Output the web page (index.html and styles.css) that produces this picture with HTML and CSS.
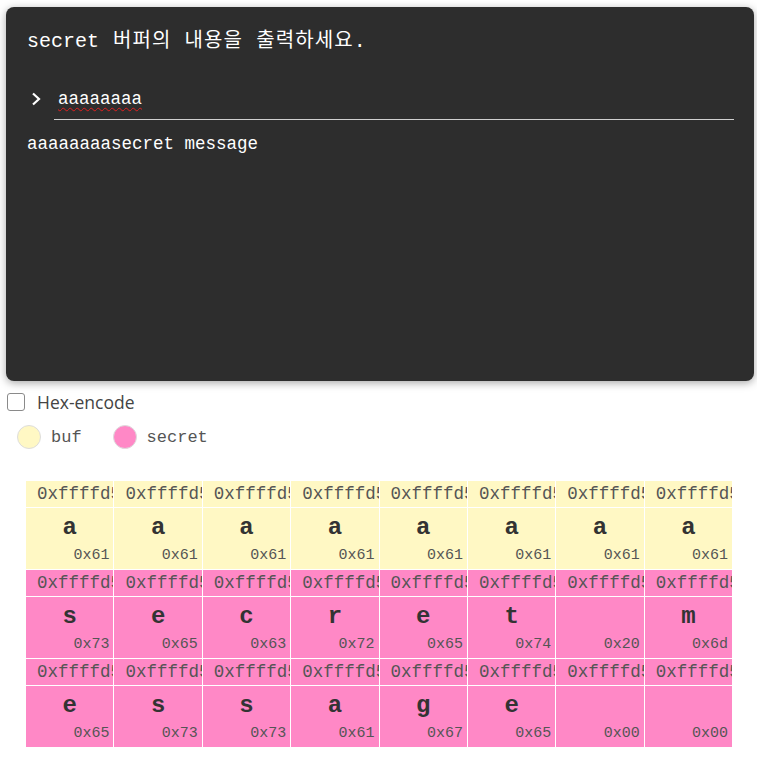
FILE: index.html
```html
<!DOCTYPE html>
<html lang="ko">
<head>
<meta charset="utf-8">
<title>secret buffer</title>
<link rel="stylesheet" href="styles.css">
</head>
<body>
<div class="terminal">
  <div class="title">secret <span class="ko">버퍼의 내용을 출력하세요</span>.</div>
  <div class="prompt">
    <svg class="chev" width="10" height="14" viewBox="0 0 10 14"><polyline points="2,1.5 8,7 2,12.5" fill="none" stroke="#fff" stroke-width="2.2"/></svg>
    <div class="input"><span class="typed">aaaaaaaa</span></div>
  </div>
  <div class="output">aaaaaaaasecret message</div>
</div>
<label class="hex"><span class="box"></span>Hex-encode</label>
<div class="legend">
  <div class="item"><span class="dot buf"></span><span class="lname">buf</span></div>
  <div class="item"><span class="dot sec"></span><span class="lname">secret</span></div>
</div>
<div class="memory">
  <div class="cell buf"><div class="addr">0xffffd5a0</div><div class="val"><div class="ch">a</div><div class="hx">0x61</div></div></div>
  <div class="cell buf"><div class="addr">0xffffd5a1</div><div class="val"><div class="ch">a</div><div class="hx">0x61</div></div></div>
  <div class="cell buf"><div class="addr">0xffffd5a2</div><div class="val"><div class="ch">a</div><div class="hx">0x61</div></div></div>
  <div class="cell buf"><div class="addr">0xffffd5a3</div><div class="val"><div class="ch">a</div><div class="hx">0x61</div></div></div>
  <div class="cell buf"><div class="addr">0xffffd5a4</div><div class="val"><div class="ch">a</div><div class="hx">0x61</div></div></div>
  <div class="cell buf"><div class="addr">0xffffd5a5</div><div class="val"><div class="ch">a</div><div class="hx">0x61</div></div></div>
  <div class="cell buf"><div class="addr">0xffffd5a6</div><div class="val"><div class="ch">a</div><div class="hx">0x61</div></div></div>
  <div class="cell buf"><div class="addr">0xffffd5a7</div><div class="val"><div class="ch">a</div><div class="hx">0x61</div></div></div>

  <div class="cell sec"><div class="addr">0xffffd5a8</div><div class="val"><div class="ch">s</div><div class="hx">0x73</div></div></div>
  <div class="cell sec"><div class="addr">0xffffd5a9</div><div class="val"><div class="ch">e</div><div class="hx">0x65</div></div></div>
  <div class="cell sec"><div class="addr">0xffffd5aa</div><div class="val"><div class="ch">c</div><div class="hx">0x63</div></div></div>
  <div class="cell sec"><div class="addr">0xffffd5ab</div><div class="val"><div class="ch">r</div><div class="hx">0x72</div></div></div>
  <div class="cell sec"><div class="addr">0xffffd5ac</div><div class="val"><div class="ch">e</div><div class="hx">0x65</div></div></div>
  <div class="cell sec"><div class="addr">0xffffd5ad</div><div class="val"><div class="ch">t</div><div class="hx">0x74</div></div></div>
  <div class="cell sec"><div class="addr">0xffffd5ae</div><div class="val"><div class="ch">&nbsp;</div><div class="hx">0x20</div></div></div>
  <div class="cell sec"><div class="addr">0xffffd5af</div><div class="val"><div class="ch">m</div><div class="hx">0x6d</div></div></div>

  <div class="cell sec"><div class="addr">0xffffd5b0</div><div class="val"><div class="ch">e</div><div class="hx">0x65</div></div></div>
  <div class="cell sec"><div class="addr">0xffffd5b1</div><div class="val"><div class="ch">s</div><div class="hx">0x73</div></div></div>
  <div class="cell sec"><div class="addr">0xffffd5b2</div><div class="val"><div class="ch">s</div><div class="hx">0x73</div></div></div>
  <div class="cell sec"><div class="addr">0xffffd5b3</div><div class="val"><div class="ch">a</div><div class="hx">0x61</div></div></div>
  <div class="cell sec"><div class="addr">0xffffd5b4</div><div class="val"><div class="ch">g</div><div class="hx">0x67</div></div></div>
  <div class="cell sec"><div class="addr">0xffffd5b5</div><div class="val"><div class="ch">e</div><div class="hx">0x65</div></div></div>
  <div class="cell sec"><div class="addr">0xffffd5b6</div><div class="val"><div class="ch">&nbsp;</div><div class="hx">0x00</div></div></div>
  <div class="cell sec"><div class="addr">0xffffd5b7</div><div class="val"><div class="ch">&nbsp;</div><div class="hx">0x00</div></div></div>
</div>
</body>
</html>
```
FILE: styles.css
```css
html, body {
  margin: 0;
  padding: 0;
  background: #fff;
}
body {
  padding: 7px 3px 0 6px;
  font-family: "Liberation Mono", "Noto Sans CJK KR", monospace;
}
.terminal {
  height: 374px;
  box-sizing: border-box;
  background: #2d2d2d;
  border-radius: 8px;
  box-shadow: 0 2px 8px rgba(0, 0, 0, 0.35);
  padding: 23px 20px 0 21px;
  color: #fff;
}
.title {
  font-size: 20px;
  line-height: 24px;
  white-space: nowrap;
}
.ko {
  letter-spacing: 1.1px;
  margin-left: 2px;
}
.prompt {
  display: flex;
  align-items: flex-end;
  margin-top: 28px;
}
.chev {
  margin: 0 13px 14px 4px;
  flex: none;
}
.input {
  flex: 1;
  padding: 6px 4px 9px 4px;
  font-size: 17.5px;
  line-height: 22px;
  border-bottom: 1px solid #cfcfcf;
}
.typed {
  text-decoration: underline wavy #e02020;
  text-decoration-thickness: 1px;
  text-underline-offset: 3px;
}
.output {
  margin-top: 13px;
  font-size: 17.5px;
  line-height: 22px;
}
.hex {
  display: flex;
  align-items: center;
  margin-top: 12px;
  margin-left: 1px;
  height: 18px;
  font-family: "Open Sans", "Noto Sans", sans-serif;
  font-size: 17.5px;
  color: #444;
}
.box {
  width: 16px;
  height: 16px;
  border: 1px solid #8a8a8a;
  border-radius: 3px;
  margin-right: 12px;
  background: #fff;
}
.legend {
  display: flex;
  gap: 31px;
  margin-top: 14px;
  padding-left: 11px;
}
.item {
  display: flex;
  align-items: center;
  gap: 10px;
}
.dot {
  width: 22px;
  height: 22px;
  border-radius: 50%;
  border: 1px solid #ddd;
}
.dot.buf { background: #fff8c4; }
.dot.sec { background: #ff88c6; }
.lname {
  font-size: 17px;
  color: #555;
}
.memory {
  display: grid;
  grid-template-columns: repeat(8, 87.4px);
  gap: 1px;
  margin-top: 32px;
  margin-left: 20px;
}
.cell {
  height: 88px;
  overflow: hidden;
}
.cell.buf { background: #fff8c4; }
.cell.sec { background: #ff88c6; }
.addr {
  height: 26px;
  line-height: 26px;
  padding-left: 11px;
  font-size: 17.5px;
  color: #555;
  white-space: nowrap;
  overflow: hidden;
  border-bottom: 1px solid #fff;
}
.val {
  height: 61px;
  padding-top: 7px;
  box-sizing: border-box;
}
.ch {
  text-align: center;
  font-size: 24px;
  font-weight: bold;
  line-height: 26px;
  color: #333;
}
.hx {
  margin-top: 6px;
  text-align: right;
  padding-right: 4px;
  font-size: 15px;
  line-height: 18px;
  color: #555;
}
```
